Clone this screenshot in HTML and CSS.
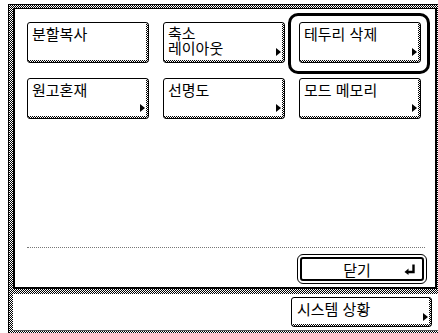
FILE: index.html
```html
<!DOCTYPE html>
<html lang="ko">
<head>
<meta charset="utf-8">
<link rel="stylesheet" href="styles.css">
</head>
<body>
<div class="frame">
  <div class="outer">
    <div class="panel">
      <div class="grid">
        <div class="btn"><span class="label">분할복사</span></div>
        <div class="btn"><span class="label two">축소<br>레이아웃</span><span class="arrow"></span></div>
        <div class="btn selected"><span class="label">테두리 삭제</span><span class="arrow"></span></div>
        <div class="btn"><span class="label">원고혼재</span><span class="arrow"></span></div>
        <div class="btn"><span class="label">선명도</span><span class="arrow"></span></div>
        <div class="btn"><span class="label">모드 메모리</span><span class="arrow"></span></div>
      </div>
      <div class="spacer"></div>
      <div class="dots"></div>
      <div class="close-row">
        <div class="close">
          <div class="close-inner">
            <span class="close-text">닫기</span>
            <svg class="ret" width="12" height="11" viewBox="0 0 12 11">
              <path d="M9.5 0.5 V8 H3" fill="none" stroke="#000" stroke-width="2.4"/>
              <path d="M0.5 8 L4.5 4.5 L4.5 11 Z" fill="#000"/>
            </svg>
          </div>
        </div>
      </div>
    </div>
    <div class="bottom">
      <div class="btn status"><span class="label">시스템 상황</span><span class="arrow"></span></div>
    </div>
  </div>
</div>
</body>
</html>
```
FILE: styles.css
```css
html, body {
  margin: 0;
  padding: 0;
  background: #fff;
}
body {
  width: 438px;
  height: 333px;
  overflow: hidden;
  font-family: "Noto Sans CJK KR", "Noto Sans", sans-serif;
  color: #000;
}
.frame {
  padding: 4px 0 0 8px;
  height: 329px;
}
.outer {
  box-sizing: border-box;
  height: 329px;
  border-top: 1px solid #000;
  border-left: 1px solid #000;
  padding: 3px 0 0 4px;
  background-image: repeating-conic-gradient(#000 0% 25%, #fff 0% 50%);
  background-size: 2px 2px;
  display: flex;
  flex-direction: column;
}
.panel {
  box-sizing: border-box;
  height: 281px;
  margin-right: 1px;
  background: #fff;
  border-left: 2px solid #000;
  border-top: 1px solid #000;
  border-right: 2px solid #000;
  border-bottom: 2px solid #000;
  padding: 13px 0 3px 12px;
  display: flex;
  flex-direction: column;
}
.grid {
  display: grid;
  grid-template-columns: repeat(3, 122px);
  grid-auto-rows: 41px;
  column-gap: 14px;
  row-gap: 15px;
}
.btn {
  position: relative;
  box-sizing: border-box;
  border: 1px solid #000;
  border-radius: 3px;
  background:
    linear-gradient(#fff, #fff) 0 0 / calc(100% - 2px) calc(100% - 2px) no-repeat,
    repeating-conic-gradient(#000 0% 25%, #fff 0% 50%) 0 0 / 2px 2px;
  padding: 2px 3px 0 4px;
}
.label {
  display: block;
  font-size: 15px;
  line-height: 17px;
  white-space: nowrap;
}
.label.two {
  line-height: 15px;
}
.arrow {
  position: absolute;
  right: 3px;
  bottom: 6px;
  width: 0;
  height: 0;
  border-left: 5px solid #000;
  border-top: 4px solid transparent;
  border-bottom: 4px solid transparent;
}
.selected::after {
  content: "";
  position: absolute;
  left: -12px;
  top: -10px;
  right: -10px;
  bottom: -12px;
  border: 3px solid #000;
  border-radius: 10px;
}
.spacer {
  flex: 1;
}
.dots {
  width: 398px;
  border-top: 1px dotted #777;
  margin-bottom: 6px;
}
.close-row {
  display: flex;
  justify-content: flex-end;
  padding-right: 8px;
}
.close {
  box-sizing: border-box;
  width: 130px;
  height: 30px;
  border: 1px solid #000;
  border-radius: 6px;
  padding: 2px;
}
.close-inner {
  box-sizing: border-box;
  height: 100%;
  border: 2px solid #000;
  border-radius: 3px;
  display: flex;
  align-items: center;
  padding: 0 6px 0 8px;
}
.close-text {
  flex: 1;
  text-align: center;
  font-size: 15px;
  line-height: 17px;
}
.ret {
  display: block;
}
.bottom {
  box-sizing: border-box;
  height: 37px;
  margin-top: 5px;
  background: #fff;
  border-bottom: 1px solid #555;
  display: flex;
  justify-content: flex-end;
  align-items: flex-start;
  padding: 3px 6px 0 0;
}
.btn.status {
  width: 141px;
  height: 30px;
  padding: 2px 3px 0 5px;
}
.btn.status .arrow {
  bottom: 5px;
}
```
